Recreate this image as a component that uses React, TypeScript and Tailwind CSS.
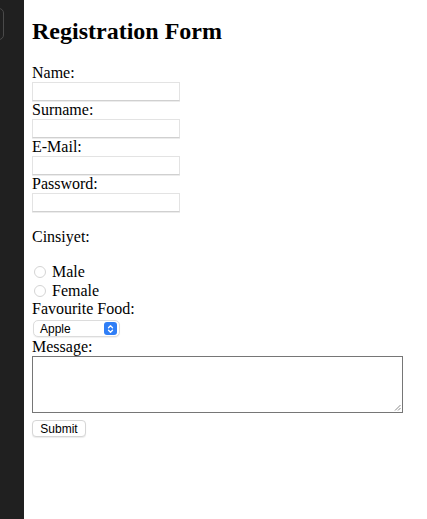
import React from "react";

export default function App() {
  const serif = { fontFamily: '"Liberation Serif", "Times New Roman", serif' } as React.CSSProperties;
  const inputCls =
    "block w-[148px] h-[19px] border border-[#e3e3e3] border-b-[#d0d0d0] shadow-[0_1px_0_#ececec] bg-white outline-none";
  return (
    <div className="flex min-h-[519px] w-full bg-white">
      <div className="relative w-[24px] shrink-0 bg-[#202020]">
        <div className="absolute left-[-20px] top-[8px] h-[32px] w-[24px] rounded-[5px] border border-[#4a4a4a]" />
      </div>
      <div className="flex-1 pl-[8px] text-black text-[16px] leading-[18px]" style={serif}>
        <h2 className="mt-[17px] mb-[19px] text-[24px] font-bold leading-[28px]">Registration Form</h2>
        <form onSubmit={(e) => e.preventDefault()}>
          <div>Name:</div>
          <input type="text" className={inputCls} />
          <div>Surname:</div>
          <input type="text" className={inputCls} />
          <div>E-Mail:</div>
          <input type="email" className={inputCls} />
          <div>Password:</div>
          <input type="password" className={inputCls} />
          <p className="my-[16px]">Cinsiyet:</p>
          <div className="flex h-[19px] items-center">
            <span className="ml-[2px] mr-[6px] inline-block h-[12px] w-[12px] rounded-full border border-[#d4d4d4] bg-white" />
            <span>Male</span>
          </div>
          <div className="flex h-[19px] items-center">
            <span className="ml-[2px] mr-[6px] inline-block h-[12px] w-[12px] rounded-full border border-[#d4d4d4] bg-white" />
            <span>Female</span>
          </div>
          <div>Favourite Food:</div>
          <div className="mt-[2px] mb-[1px] ml-[1px] flex h-[17px] w-[87px] items-center justify-between rounded-[5px] border border-[#dcdcdc] bg-white pl-[6px] pr-[2px] shadow-[0_1px_1px_rgba(0,0,0,0.06)]">
            <span className="text-[12px] leading-none" style={{ fontFamily: '"Liberation Sans", Arial, sans-serif' }}>Apple</span>
            <span className="flex h-[13px] w-[13px] items-center justify-center rounded-[3px] bg-[#2f7ef6]">
              <svg width="7" height="10" viewBox="0 0 7 10" fill="none" stroke="white" strokeWidth="1.3" strokeLinecap="round" strokeLinejoin="round">
                <path d="M1.5 3.8 L3.5 1.8 L5.5 3.8" />
                <path d="M1.5 6.2 L3.5 8.2 L5.5 6.2" />
              </svg>
            </span>
          </div>
          <div>Message:</div>
          <div className="relative h-[57px] w-[371px] border border-[#767676] bg-white">
            <svg className="absolute bottom-[1px] right-[1px]" width="7" height="7" viewBox="0 0 7 7" stroke="#8a8a8a" strokeWidth="1">
              <path d="M1 6.5 L6.5 1" />
              <path d="M4 6.5 L6.5 4" />
            </svg>
          </div>
          <button
            type="submit"
            className="mt-[7px] flex h-[17px] w-[54px] items-center justify-center rounded-[4px] border border-[#d6d6d6] bg-white text-[12px] leading-none shadow-[0_1px_1px_rgba(0,0,0,0.08)]"
            style={{ fontFamily: '"Liberation Sans", Arial, sans-serif' }}
          >
            Submit
          </button>
        </form>
      </div>
    </div>
  );
}
